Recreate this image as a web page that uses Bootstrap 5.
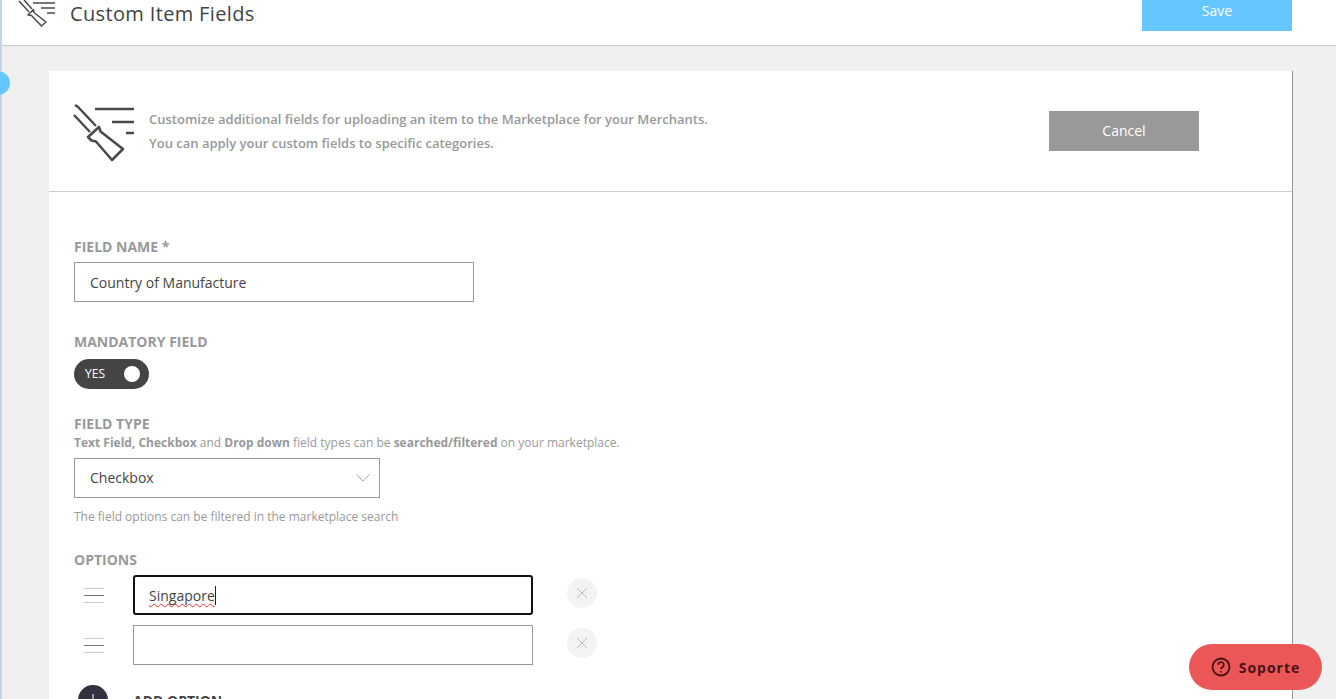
<!DOCTYPE html>
<html lang="en">
<head>
<meta charset="utf-8">
<title>Custom Item Fields</title>
<link href="https://cdn.jsdelivr.net/npm/bootstrap@5.3.0/dist/css/bootstrap.min.css" rel="stylesheet">
<style>
html,body{height:699px;overflow:hidden}
body{font-family:"Open Sans",sans-serif;background:#f0f0f0;color:#444;position:relative}
.app-shell{border-left:2px solid #c9d3e8;height:699px;overflow:hidden}
.top-bar{height:46px;background:#fff;border-bottom:1px solid #ccc;padding-right:44px}
.top-icon{width:38px;height:27px;margin-left:16px;flex:none;align-self:flex-start}
.top-title{font-size:20px;line-height:28px;margin:0 0 0 14px;font-weight:400;color:#444;letter-spacing:.35px;align-self:flex-start}
.save-btn{width:150px;height:31px;background:#66c6ff;color:#fff;border:0;border-radius:0;font-size:14px;padding:0 0 11px;align-self:flex-start;margin-left:auto}
.save-btn:hover{background:#66c6ff;color:#fff}
.side-dot{position:absolute;left:-14px;top:71px;width:24px;height:24px;border-radius:50%;background:#66c6ff}
.sheet{margin:25px 43px 0 47px;background:#fff;border-right:1px solid #999;height:640px}
.sheet-head{height:121px;border-bottom:1px solid #ccc;padding-left:24px}
.head-icon{width:62px;height:58px;flex:none;margin-top:3px}
.head-text{font-size:13px;line-height:24px;font-weight:600;color:#999;margin:0 0 0 14px;width:900px;flex:none}
.cancel-btn{width:150px;height:40px;background:#999;color:#fff;border:0;border-radius:0;font-size:14px;padding:0 0 2px;flex:none}
.cancel-btn:hover{background:#999;color:#fff}
.form-wrap{padding:45px 0 0 25px}
.fld-label{display:block;font-size:14px;line-height:20px;font-weight:700;color:#999;margin:0}
.fld-input{display:block;width:400px;height:40px;border:1px solid #999;border-radius:0;padding:0 15px;font-size:14px;color:#444;background:#fff;line-height:40px}
.name-input{margin-top:5px}
.gap-mand{margin-top:30px}
.toggle-pill{width:75px;height:30px;border-radius:15px;background:#444;color:#fff;font-size:12px;margin-top:7px;padding:0 9px 0 11px}
.toggle-knob{width:16px;height:16px;border-radius:50%;background:#fff}
.gap-type{margin-top:25px}
.type-hint{font-size:12px;line-height:16px;color:#999;margin:1px 0 0}
.type-hint b{font-weight:700}
.type-select{width:306px;margin-top:7px;position:relative}
.type-chev{width:14px;height:8px;flex:none;margin-right:-6px}
.filter-hint{font-size:12px;line-height:16px;color:#999;margin:11px 0 0}
.gap-opt{margin-top:25px}
.opt-row{height:40px}
.opt-row + .opt-row{margin-top:10px}
.opt-first{margin-top:5px}
.drag-ic{width:20px;margin:0 29px 0 10px;flex:none}
.drag-ic span{display:block;height:1px;background:#ccc;margin-bottom:6px}
.drag-ic span:nth-child(2){background:#777}
.drag-ic span:last-child{margin-bottom:0}
.focus-input{border:2px solid #111;border-radius:3px;padding:0 14px;line-height:38px;position:relative}
.wavy{text-decoration:underline wavy #d33 1px;text-underline-offset:2px;text-decoration-skip-ink:none;border-right:1px solid #222}
.rm-btn{width:30px;height:30px;border-radius:50%;background:#f3f3f3;margin:-4px 0 0 34px;flex:none}
.rm-btn svg{width:12px;height:12px}
.add-row{margin-top:20px}
.add-circle{width:30px;height:30px;border-radius:50%;background:#33303f;margin-left:4px;flex:none}
.add-circle svg{width:12px;height:12px}
.add-text{font-size:14px;font-weight:700;color:#444;margin-left:25px}
.help-pill{position:fixed;left:1189px;top:644px;width:133px;height:46px;border-radius:23px;background:#eb5757;color:#4a1216;font-size:14px;font-weight:700;letter-spacing:1px;border:0;padding:0}
.help-pill svg{width:20px;height:20px;margin-right:8px}
</style>
</head>
<body>
<div class="side-dot"></div>
<div class="app-shell">
  <header class="top-bar d-flex align-items-center">
    <svg class="top-icon" viewBox="0 0 38 27" fill="none" stroke="#4a4a4a" stroke-width="1.500" aria-hidden="true">
      <path d="M1 1 11 12M6 0 14 9"/>
      <path d="M10 15 15.500 9.500 16 12.500 28 22 23.500 26 13.500 15.500Z" stroke-linejoin="round"/>
      <path d="M15 3H37M23 8H37M29 13H37"/>
    </svg>
    <h1 class="top-title">Custom Item Fields</h1>
    <button class="btn save-btn" type="button">Save</button>
  </header>
  <main class="sheet">
    <section class="sheet-head d-flex align-items-center">
      <svg class="head-icon" viewBox="0 0 62 58" fill="none" stroke="#4a4a4a" aria-hidden="true">
        <path d="M2 1 5 3 23 22M1 11 17 28" stroke-width="2.400"/>
        <path d="M15 33 26 23 27.500 27.500 50 45 39 56 23 37.500 18.500 36.500Z" stroke-width="2.600" stroke-linejoin="round"/>
        <path d="M22 5H61M39 18H61M53 29H61" stroke-width="2.600"/>
      </svg>
      <p class="head-text">Customize additional fields for uploading an item to the Marketplace for your Merchants.<br>You can apply your custom fields to specific categories.</p>
      <button class="btn cancel-btn" type="button">Cancel</button>
    </section>
    <form class="form-wrap">
      <label class="fld-label">FIELD NAME *</label>
      <div class="fld-input name-input">Country of Manufacture</div>
      <label class="fld-label gap-mand">MANDATORY FIELD</label>
      <div class="toggle-pill d-flex align-items-center justify-content-between"><span>YES</span><span class="toggle-knob"></span></div>
      <label class="fld-label gap-type">FIELD TYPE</label>
      <p class="type-hint"><b>Text Field, Checkbox</b> and <b>Drop down</b> field types can be <b>searched/filtered</b> on your marketplace.</p>
      <div class="fld-input type-select d-flex align-items-center justify-content-between">
        <span>Checkbox</span>
        <svg class="type-chev" viewBox="0 0 14 8" fill="none" stroke="#aaa" aria-hidden="true"><path d="M.5 .5 7 7 13.500 .5"/></svg>
      </div>
      <p class="filter-hint">The field options can be filtered in the marketplace search</p>
      <label class="fld-label gap-opt">OPTIONS</label>
      <div class="opt-row opt-first d-flex align-items-center">
        <div class="drag-ic"><span></span><span></span><span></span></div>
        <div class="fld-input focus-input"><span class="wavy">Singapore</span></div>
        <div class="rm-btn d-flex align-items-center justify-content-center"><svg viewBox="0 0 12 12" stroke="#bbb" fill="none"><path d="M1 1 11 11M11 1 1 11"/></svg></div>
      </div>
      <div class="opt-row d-flex align-items-center">
        <div class="drag-ic"><span></span><span></span><span></span></div>
        <div class="fld-input"></div>
        <div class="rm-btn d-flex align-items-center justify-content-center"><svg viewBox="0 0 12 12" stroke="#bbb" fill="none"><path d="M1 1 11 11M11 1 1 11"/></svg></div>
      </div>
      <div class="add-row d-flex align-items-center">
        <div class="add-circle d-flex align-items-center justify-content-center"><svg viewBox="0 0 12 12" stroke="#fff" fill="none"><path d="M6 0V12M0 6H12"/></svg></div>
        <span class="add-text">ADD OPTION</span>
      </div>
    </form>
  </main>
</div>
<button class="btn help-pill d-flex align-items-center justify-content-center" type="button">
  <svg viewBox="0 0 20 20" fill="none" stroke="#4a1216" stroke-width="1.800" aria-hidden="true"><circle cx="10" cy="10" r="8.500"/><path d="M7.300 7.800a2.700 2.700 0 1 1 4 2.400c-.9.500-1.300 1-1.300 2"/><path d="M10 14v1.500"/></svg>
  Soporte
</button>
<script src="https://cdn.jsdelivr.net/npm/bootstrap@5.3.0/dist/js/bootstrap.bundle.min.js"></script>
</body>
</html>
